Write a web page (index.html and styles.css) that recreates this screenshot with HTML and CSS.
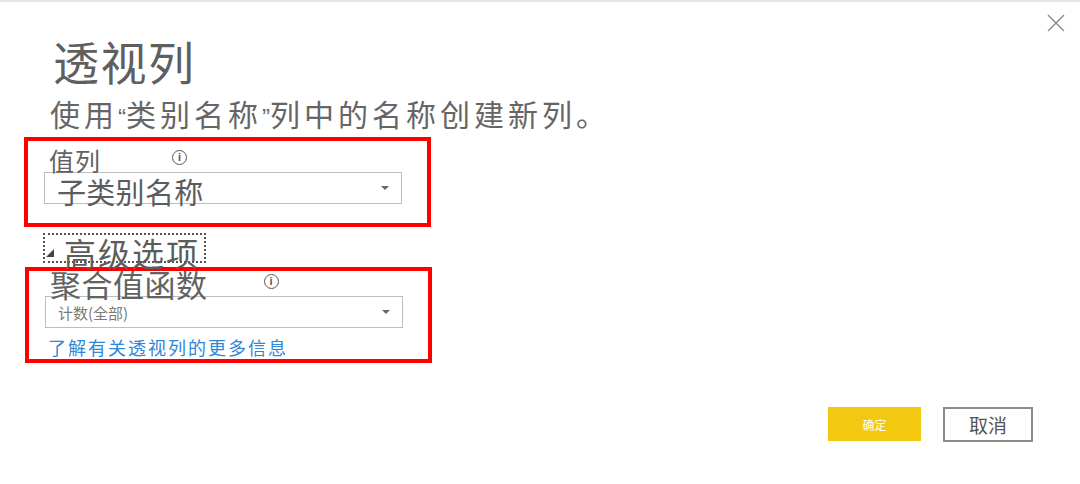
FILE: index.html
```html
<!DOCTYPE html>
<html lang="zh-CN">
<head>
  <meta charset="UTF-8">
  <title>透视列</title>
  <link rel="stylesheet" href="styles.css">
</head>
<body>
  <div class="dialog">
    <button class="close" aria-label="关闭">
      <svg width="18" height="18" viewBox="0 0 18 18">
        <path d="M1 1 L17 17 M17 1 L1 17" stroke="#8a8a8a" stroke-width="1.4" fill="none"/>
      </svg>
    </button>

    <h1 class="title">透视列</h1>
    <p class="desc">使用<span class="q">“</span>类别名称<span class="q">”</span>列中的名称创建新列。</p>

    <div class="marked marked-first">
      <div class="label-row">
        <span class="label label-small">值列</span>
        <span class="info info-first">i</span>
      </div>
      <div class="select">
        <span class="select-text select-big">子类别名称</span>
        <span class="caret"></span>
      </div>
    </div>

    <div class="advanced">
      <span class="corner"></span>
      <span class="advanced-text">高级选项</span>
    </div>

    <div class="marked marked-second">
      <div class="label-row">
        <span class="label label-big">聚合值函数</span>
        <span class="info info-second">i</span>
      </div>
      <div class="select">
        <span class="select-text select-small">计数(全部)</span>
        <span class="caret"></span>
      </div>
      <a class="learn" href="#">了解有关透视列的更多信息</a>
    </div>

    <div class="actions">
      <button class="btn btn-ok">确定</button>
      <button class="btn btn-cancel">取消</button>
    </div>
  </div>
</body>
</html>
```

FILE: styles.css
```css
* { box-sizing: border-box; }

body {
  margin: 0;
  background: #ffffff;
  font-family: "Noto Sans CJK SC", "Noto Sans", sans-serif;
  color: #666666;
}

.dialog {
  position: relative;
  width: 1080px;
  height: 484px;
  border-top: 2px solid #e4e4e4;
  padding-left: 24px;
}

.close {
  position: absolute;
  top: 12px;
  right: 15px;
  padding: 0;
  border: none;
  background: none;
  line-height: 0;
}

.title {
  margin: 35px 0 0 29px;
  font-size: 46px;
  line-height: 46px;
  font-weight: 400;
  letter-spacing: 1.5px;
  color: #5f5f5f;
}

.desc {
  margin: 15px 0 0 26px;
  font-size: 30px;
  line-height: 30px;
  letter-spacing: 4px;
  color: #666666;
}

.q {
  font-family: "Liberation Sans", sans-serif;
  font-size: 24px;
  line-height: 0;
  letter-spacing: 0;
}

.marked {
  width: 407px;
  border: 4px solid #ff0000;
}

.marked-first {
  margin-top: 9px;
  height: 90px;
  padding-top: 8px;
}

.marked-second {
  margin: 4px 0 0 1px;
  height: 96px;
  padding-top: 0;
}

.label-row {
  display: flex;
  align-items: center;
  padding-left: 21px;
}

.label {
  color: #626262;
}

.label-small {
  font-size: 25px;
  line-height: 23px;
  letter-spacing: 1px;
}

.label-big {
  font-size: 31px;
  line-height: 25px;
  letter-spacing: 0.5px;
}

.info {
  width: 15px;
  height: 15px;
  border: 1.4px solid #555555;
  border-radius: 50%;
  font-family: "Liberation Sans", sans-serif;
  font-size: 11px;
  font-weight: 700;
  line-height: 12px;
  text-align: center;
  color: #555555;
}

.info-first {
  margin: -6px 0 0 71px;
}

.info-second {
  margin: -4px 0 0 56px;
}

.select {
  display: flex;
  align-items: center;
  justify-content: space-between;
  width: 358px;
  height: 32px;
  margin-left: 16px;
  padding: 0 12px 0 12px;
  border: 1.5px solid #bdbdbd;
}

.select-big {
  font-size: 29px;
  line-height: 32px;
  margin-top: 6px;
  letter-spacing: 0.3px;
  color: #5c5c5c;
}

.select-small {
  font-size: 15px;
  color: #7a7a7a;
}

.caret {
  width: 0;
  height: 0;
  border-left: 4px solid transparent;
  border-right: 4px solid transparent;
  border-top: 4px solid #666666;
}

.advanced {
  display: flex;
  align-items: center;
  width: 163px;
  height: 30px;
  margin: 6px 0 0 19px;
  border: 2px dotted #555555;
  white-space: nowrap;
}

.corner {
  width: 0;
  height: 0;
  margin: 10px 0 0 1px;
  border-left: 8px solid transparent;
  border-bottom: 8px solid #444444;
}

.advanced-text {
  margin: 8px 0 0 10px;
  font-size: 32px;
  line-height: 30px;
  letter-spacing: 2px;
  color: #5c5c5c;
}

.learn {
  display: block;
  margin: 9px 0 0 19px;
  font-size: 18px;
  line-height: 20px;
  letter-spacing: 2px;
  color: #2f87da;
  text-decoration: none;
}

.actions {
  display: flex;
  justify-content: flex-end;
  gap: 22px;
  margin-top: 44px;
  padding-right: 47px;
}

.btn {
  height: 34px;
  padding: 0;
  font-family: "Noto Sans CJK SC", sans-serif;
  cursor: pointer;
}

.btn-ok {
  width: 93px;
  border: none;
  background: #f2c811;
  color: #ffffff;
  font-size: 12px;
}

.btn-cancel {
  width: 90px;
  height: 35px;
  border: 2px solid #8c8c8c;
  background: #ffffff;
  color: #555555;
  font-size: 19px;
}
```
